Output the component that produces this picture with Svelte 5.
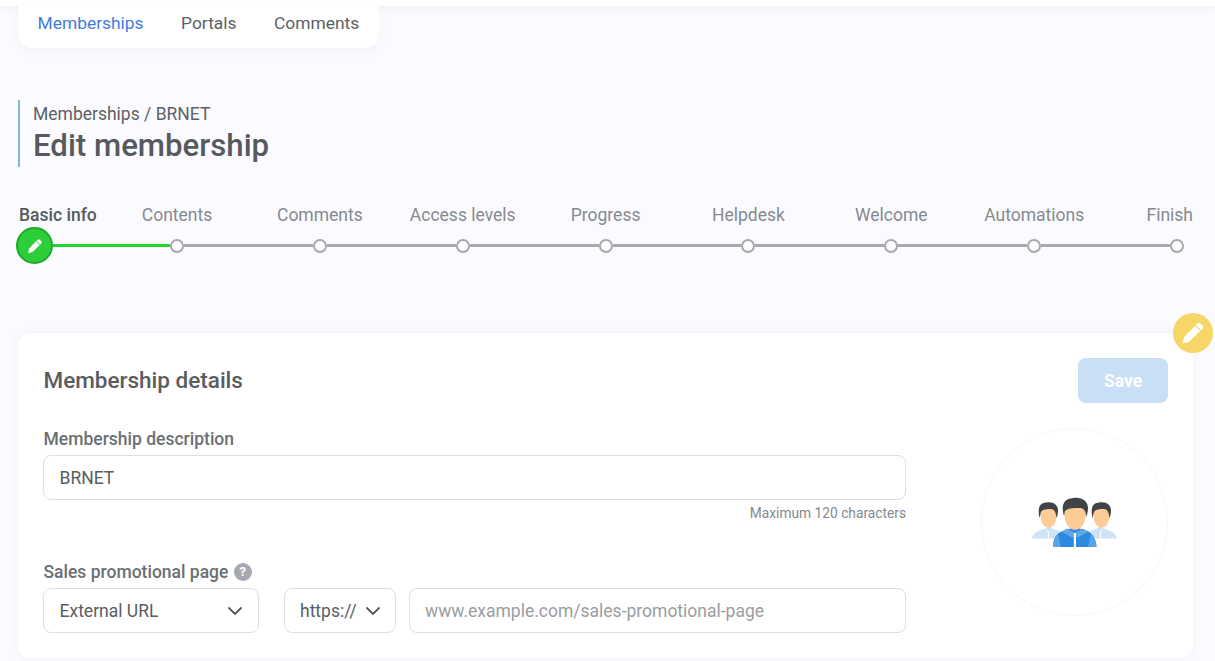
<script>
  const tabs = ['Memberships', 'Portals', 'Comments'];
  const steps = ['Basic info', 'Contents', 'Comments', 'Access levels', 'Progress', 'Helpdesk', 'Welcome', 'Automations', 'Finish'];
</script>

<div class="page">
  <div class="topbar"></div>
  <nav class="tabs">
    {#each tabs as t, i}
      <span class="tab" class:active={i === 0}>{t}</span>
    {/each}
  </nav>

  <header class="head">
    <div class="crumb">Memberships / BRNET</div>
    <h1>Edit membership</h1>
  </header>

  <section class="stepper">
    <div class="labels">
      {#each steps as s, i}
        <span class="label" class:current={i === 0} class:last={i === steps.length - 1}>{s}</span>
      {/each}
    </div>
    <div class="track">
      <span class="now">
        <svg width="18" height="18" viewBox="0 0 18 18"><path d="M2 16l1-4.600L11.600 2.800a1.500 1.500 0 0 1 2.100 0l1.500 1.500a1.500 1.500 0 0 1 0 2.100L6.600 15z" fill="#fff"/><path d="M10.400 4l3.600 3.600" stroke="#2ccf3a" stroke-width="1"/></svg>
      </span>
      <span class="seg first"><i class="line green"></i><b class="dot"></b></span>
      {#each steps.slice(2) as s}
        <span class="seg"><i class="line"></i><b class="dot"></b></span>
      {/each}
    </div>
  </section>

  <main class="card">
    <span class="edit">
      <svg width="24" height="24" viewBox="0 0 24 24"><path d="M1.500 22.500l1.600-6.600L16.600 2.400a2 2 0 0 1 2.800 0l2.200 2.200a2 2 0 0 1 0 2.800L8.100 20.900z" fill="#fff"/><path d="M14.600 4.600l4.800 4.800" stroke="#f6d666" stroke-width="1.200"/></svg>
    </span>
    <div class="card-head">
      <h2>Membership details</h2>
      <button class="save" type="button">Save</button>
    </div>
    <div class="body">
      <div class="fields">
        <label class="lbl" for="desc">Membership description</label>
        <input id="desc" class="input" value="BRNET" />
        <div class="hint">Maximum 120 characters</div>

        <div class="lbl sales">Sales promotional page <span class="q">?</span></div>
        <div class="row">
          <div class="input select ext">External URL
            <svg width="16" height="10" viewBox="0 0 16 10"><path d="M1.500 1.500L8 8l6.500-6.500" fill="none" stroke="#555" stroke-width="1.800"/></svg>
          </div>
          <div class="input select proto">https://
            <svg width="16" height="10" viewBox="0 0 16 10"><path d="M1.500 1.500L8 8l6.500-6.500" fill="none" stroke="#555" stroke-width="1.800"/></svg>
          </div>
          <input class="input url" placeholder="www.example.com/sales-promotional-page" />
        </div>
      </div>
      <div class="avatar">
        <svg width="85" height="50" viewBox="0 0 85 50">
          <path d="M0 41.500C1 37 3 35 12 32L17 29L21 32C25 33 29 34 31 37L31 41.500Z" fill="#cfe3f8"/>
          <path d="M85 41.500C84 37 82 35 73 32L68 29L64 32C60 33 56 34 54 37L54 41.500Z" fill="#cfe3f8"/>
          <path d="M14 32L17 35L17 41.500L16 41.500L16 36ZM71 32L68 35L68 41.500L69 41.500L69 36Z" fill="#fff"/>
          <ellipse cx="16.500" cy="19" rx="8" ry="11.500" fill="#fdcb94"/>
          <path d="M7.500 21C5.500 12 7 6 14 5.500C21 4 26 8 26 13C26 16 25.500 19 24.500 21C24 15 22 12 19 12C15 12 11 12 9 15Z" fill="#404448"/>
          <ellipse cx="69.500" cy="19" rx="8" ry="11.500" fill="#fdcb94"/>
          <path d="M60.500 21C58.500 12 60 6 67 5.500C74 4 79 8 79 13C79 16 78.500 19 77.500 21C77 15 75 12 72 12C68 12 64 12 62 15Z" fill="#404448"/>
          <path d="M21 50C21 42 24 36 32 33.500L43 30L54 33.500C61 36 64 42 64.500 50Z" fill="#2e89e0"/>
          <path d="M21 50C21 44 23 40 26 37L29 50ZM64.500 50C64.500 44 62 40 59 37L56 50Z" fill="#5aa3e8"/>
          <path d="M35 31.500L43 36L51 31.500L56 35L47 40L39 40L30 35Z" fill="#62a6e8"/>
          <rect x="41.800" y="36" width="2.200" height="14" fill="#fff"/>
          <ellipse cx="43" cy="18" rx="10.500" ry="15" fill="#fdcb94"/>
          <path d="M32 19C29 9 31 2 41 1C51 0 56 5 56 11C56 15 55 18 54 20C54 14 52 11 47 11C42 11 36 11 33 14Z" fill="#404448"/>
        </svg>
      </div>
    </div>
  </main>
</div>

<style>
  :global(body) {
    margin: 0;
    background: #fbfbff;
    font-family: Roboto, "Liberation Sans", sans-serif;
    color: #5a5d61;
    overflow: hidden;
  }
  .page {
    height: 661px;
    overflow: hidden;
    box-sizing: border-box;
    padding: 0 22px 0 18px;
    position: relative;
  }
  .topbar {
    height: 6px;
    margin: 0 -22px 0 -18px;
    background: #fff;
    box-shadow: 0 1px 8px rgba(60, 60, 90, 0.09);
  }
  .tabs {
    position: relative;
    display: flex;
    gap: 37.500px;
    width: 361px;
    height: 42px;
    box-sizing: border-box;
    padding: 4.500px 0 0 19.500px;
    background: #fff;
    border-radius: 0 0 14px 14px;
    box-shadow: 0 3px 10px rgba(60, 60, 90, 0.05);
    font-size: 17.400px;
    line-height: 24px;
    color: #5c5f63;
  }
  .tab.active { color: #3f7de0; }
  .head {
    margin-top: 52px;
    height: 67px;
    border-left: 2px solid #7db7ea;
    padding-left: 13px;
    box-sizing: border-box;
  }
  .crumb {
    font-size: 17.500px;
    line-height: 22px;
    padding-top: 3px;
    color: #5e6165;
  }
  h1 {
    margin: 0;
    font-size: 31.200px;
    line-height: 42px;
    font-weight: 500;
    color: #565a5f;
  }
  .stepper { margin-top: 36px; }
  .labels {
    display: grid;
    grid-template-columns: 86.600px repeat(7, 142.860px) 1fr;
    height: 24px;
    line-height: 24px;
    font-size: 17.500px;
    color: #858a90;
    margin-left: 1px;
  }
  .label { text-align: center; white-space: nowrap; }
  .label:first-child { text-align: left; }
  .label.last { text-align: right; }
  .label.current { color: #56595d; font-weight: 500; }
  .track {
    display: flex;
    align-items: center;
    margin: 0 9px 0 -2px;
    height: 37px;
  }
  .now {
    flex: none;
    width: 37px;
    height: 37px;
    box-sizing: border-box;
    border-radius: 50%;
    background: #2ccf3a;
    border: 2px solid #1fa82c;
    display: flex;
    align-items: center;
    justify-content: center;
  }
  .seg {
    flex: 1;
    display: flex;
    align-items: center;
  }
  .seg.first { flex: none; width: 131px; }
  .line { flex: 1; height: 3px; background: #a7a8b1; display: block; }
  .line.green { background: #22d334; }
  .dot {
    flex: none;
    width: 14px;
    height: 14px;
    box-sizing: border-box;
    border: 2px solid #a7a8b1;
    background: #fff;
    border-radius: 50%;
  }
  .card {
    position: relative;
    margin-top: 69px;
    width: 1175px;
    height: 325px;
    box-sizing: border-box;
    background: #fff;
    border-radius: 12px;
    padding: 25px 25px 0;
    box-shadow: 0 0 10px rgba(60, 60, 90, 0.06);
  }
  .edit {
    position: absolute;
    right: -20px;
    top: -20px;
    width: 40px;
    height: 40px;
    border-radius: 50%;
    background: #f6d666;
    display: flex;
    align-items: center;
    justify-content: center;
  }
  .card-head {
    display: flex;
    justify-content: space-between;
    align-items: center;
    height: 45px;
  }
  h2 {
    margin: -2px 0 0 0.500px;
    font-size: 22.500px;
    font-weight: 500;
    color: #5a5c5e;
  }
  .save {
    width: 90px;
    height: 45px;
    border: 0;
    border-radius: 8px;
    background: #c9dff6;
    color: #fff;
    font: 700 17.500px Roboto, sans-serif;
  }
  .body {
    display: flex;
    justify-content: space-between;
  }
  .fields { width: 863px; }
  .lbl {
    display: block;
    font-size: 17.500px;
    font-weight: 500;
    line-height: 24px;
    color: #6b6f73;
    margin: 24px 0 4px 0.500px;
  }
  .lbl.sales { margin-top: 37px; margin-bottom: 4px; }
  .q {
    display: inline-flex;
    width: 18px;
    height: 18px;
    border-radius: 50%;
    background: #a7a8b1;
    color: #fff;
    font-size: 13px;
    font-weight: 700;
    align-items: center;
    justify-content: center;
    vertical-align: 2px;
    margin-left: 1px;
  }
  .input {
    display: block;
    width: 100%;
    height: 45px;
    box-sizing: border-box;
    border: 1px solid #dedfe2;
    border-radius: 8px;
    padding: 0 15.500px;
    background: #fff;
    font: 400 17.500px Roboto, sans-serif;
    color: #5a5d61;
    outline: none;
  }
  .input::placeholder { color: #9a9da1; opacity: 1; }
  .hint {
    text-align: right;
    font-size: 13.750px;
    line-height: 20px;
    margin-top: 3px;
    color: #85898f;
  }
  .row { display: flex; }
  .select {
    display: flex;
    align-items: center;
    justify-content: space-between;
  }
  .ext { width: 216px; flex: none; padding-right: 15px; }
  .proto { width: 112px; flex: none; margin-left: 25px; padding: 0 14px 0 15px; }
  .url { flex: 1; width: auto; min-width: 0; margin-left: 13px; padding: 0 15px; }
  .avatar {
    width: 187px;
    height: 188px;
    box-sizing: border-box;
    border: 1px solid #f7f7f9;
    border-radius: 50%;
    margin-top: 25px;
    display: flex;
    align-items: center;
    justify-content: center;
  }
</style>
